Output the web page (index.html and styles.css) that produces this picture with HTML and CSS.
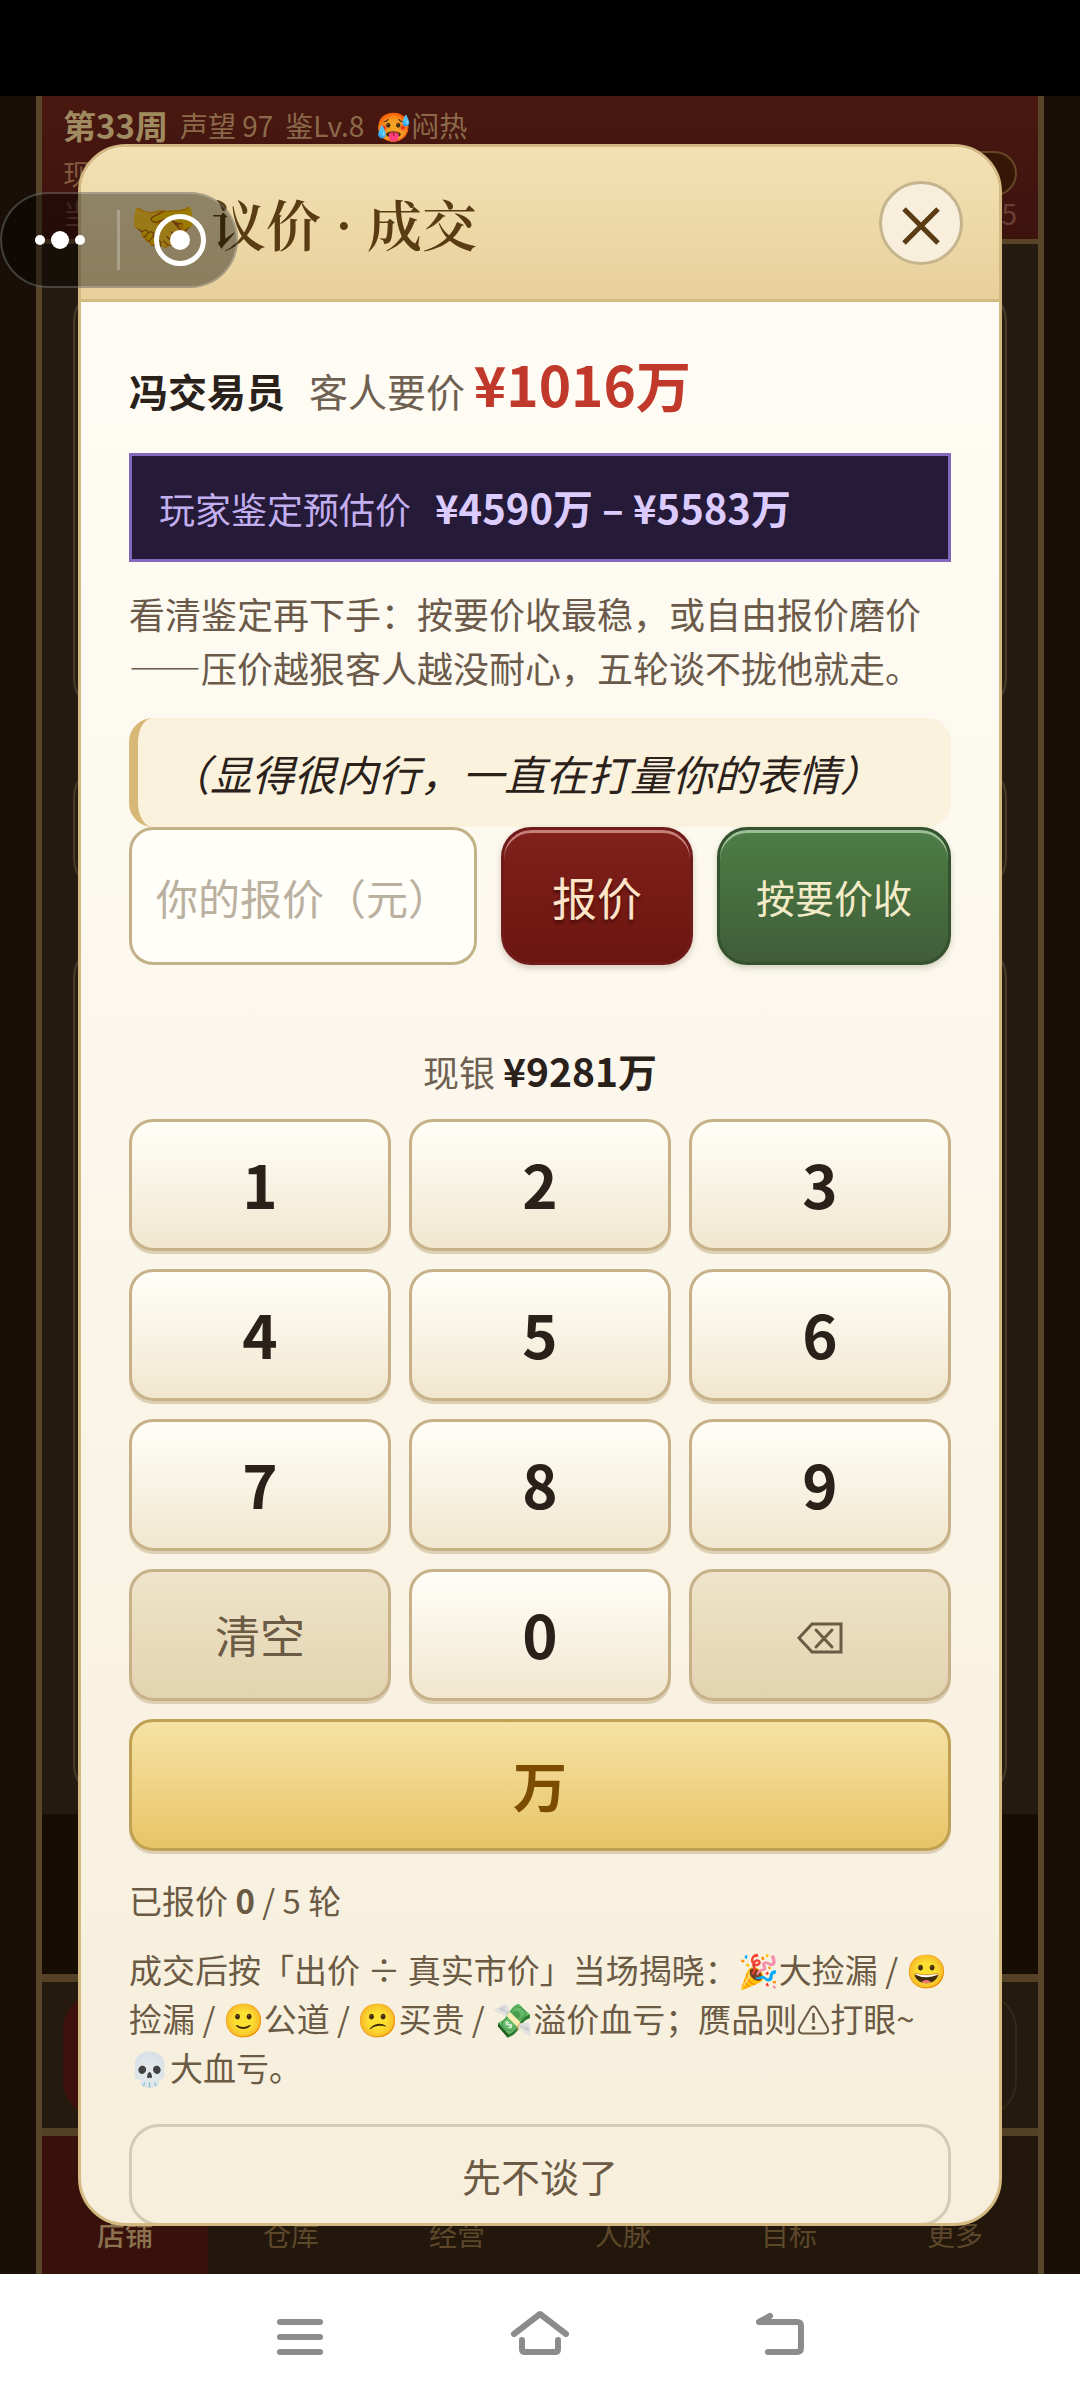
FILE: index.html
```html
<!DOCTYPE html>
<html lang="zh-CN">
<head>
<meta charset="utf-8">
<meta name="viewport" content="width=device-width, initial-scale=1">
<title>议价 · 成交</title>
<link rel="stylesheet" href="styles.css">
</head>
<body>
<div class="phone">
  <div class="statusbar"></div>

  <main class="stage">
    <div class="game">
      <header class="hud">
        <p class="hud-row"><strong class="week">第33周</strong><span>声望 97</span><span>鉴Lv.8</span><span>🥵闷热</span></p>
        <p class="hud-row hud-cash"><span>现</span><span class="pill"></span></p>
        <p class="hud-row hud-day"><span>当</span><span>5</span></p>
      </header>
      <div class="room">
        <div class="card card-a"></div>
        <div class="card card-b"></div>
        <div class="card card-c"></div>
      </div>
      <div class="shade"></div>
      <div class="tray"><div class="tray-main"></div><div class="tray-side"></div></div>
      <nav class="tabs">
        <a class="tab tab-on" href="#shop">店铺</a>
        <a class="tab" href="#store">仓库</a>
        <a class="tab" href="#manage">经营</a>
        <a class="tab" href="#people">人脉</a>
        <a class="tab" href="#goals">目标</a>
        <a class="tab" href="#more">更多</a>
      </nav>
    </div>

    <section class="modal" role="dialog" aria-labelledby="modal-title">
      <header class="modal-head">
        <h1 class="modal-title" id="modal-title">🤝 议价 · 成交</h1>
        <button class="close" type="button" aria-label="关闭">
          <svg width="38" height="38" viewBox="0 0 38 38"><path d="M2 2L36 36M36 2L2 36" fill="none" stroke="#5a3c14" stroke-width="5"/></svg>
        </button>
      </header>
      <div class="modal-body">
        <p class="ask"><strong>冯交易员</strong><span class="ask-label">客人要价 <b class="ask-price">¥1016万</b></span></p>
        <p class="estimate"><span>玩家鉴定预估价</span><b class="estimate-price">¥4590万 – ¥5583万</b></p>
        <p class="hint">看清鉴定再下手：按要价收最稳，或自由报价磨价——压价越狠客人越没耐心，五轮谈不拢他就走。</p>
        <blockquote class="quote">（显得很内行，一直在打量你的表情）</blockquote>
        <form class="offer">
          <input class="offer-input" type="text" inputmode="numeric" aria-label="你的报价（元）" placeholder="你的报价（元）">
          <button class="btn btn-offer" type="button">报价</button>
          <button class="btn btn-accept" type="button">按要价收</button>
        </form>
        <p class="cash">现银 <b>¥9281万</b></p>
        <div class="keypad">
          <button class="key" type="button">1</button>
          <button class="key" type="button">2</button>
          <button class="key" type="button">3</button>
          <button class="key" type="button">4</button>
          <button class="key" type="button">5</button>
          <button class="key" type="button">6</button>
          <button class="key" type="button">7</button>
          <button class="key" type="button">8</button>
          <button class="key" type="button">9</button>
          <button class="key key-tool" type="button">清空</button>
          <button class="key" type="button">0</button>
          <button class="key key-tool" type="button" aria-label="退格">
            <svg class="erase" width="46" height="32" viewBox="0 0 46 32"><path d="M2 16L15 2H44V30H15Z" fill="none" stroke="#6b5a44" stroke-width="3"/><path d="M19 8L35 25M35 8L19 25" fill="none" stroke="#6b5a44" stroke-width="3" stroke-linecap="round"/></svg>
          </button>
          <button class="key key-wan" type="button">万</button>
        </div>
        <p class="rounds">已报价 <b>0</b> / 5 轮</p>
        <p class="legend">成交后按「出价 ÷ 真实市价」当场揭晓：🎉大捡漏 / 😀捡漏 / 🙂公道 / 😕买贵 / 💸溢价血亏；赝品则<svg class="warn" role="img" aria-label="警告" width="33" height="30" viewBox="0 0 33 30"><path d="M13.500 3.500Q16.500 -1 19.500 3.500L30.500 22.500Q32.500 28 27.500 28.500H5.500Q.5 28 2.500 22.500Z" fill="none" stroke="#6b5a44" stroke-width="2"/><path d="M16.500 8V18" stroke="#6b5a44" stroke-width="2.500"/><circle cx="16.500" cy="23" r="2" fill="#6b5a44"/></svg>打眼~💀大血亏。</p>
        <button class="leave" type="button">先不谈了</button>
      </div>
    </section>

    <div class="capsule">
      <svg width="238" height="96" viewBox="0 0 238 96">
        <g fill="#fff"><circle cx="40" cy="48" r="5"/><circle cx="60" cy="48" r="9"/><circle cx="80" cy="48" r="5"/><circle cx="180" cy="48" r="10"/></g>
        <path d="M118.500 18V78" stroke="#fff" stroke-opacity=".25" stroke-width="3"/>
        <circle cx="180" cy="48" r="23.500" fill="none" stroke="#fff" stroke-width="5"/>
      </svg>
    </div>
  </main>

  <nav class="sysnav" aria-label="系统导航">
    <button class="sysbtn" type="button" aria-label="菜单"><svg width="64" height="64" viewBox="0 0 64 64"><path d="M12 17H52M12 32H52M12 47H52"/></svg></button>
    <button class="sysbtn" type="button" aria-label="主页"><svg width="64" height="64" viewBox="0 0 64 64"><path d="M6 29L32 9L58 29M14 35V44Q14 47 17 47H47Q50 47 50 44V35"/></svg></button>
    <button class="sysbtn" type="button" aria-label="返回"><svg width="64" height="64" viewBox="0 0 64 64"><path d="M22 11L11 17H49Q53 17 53 21V43Q53 47 49 47H20"/></svg></button>
  </nav>
</div>
</body>
</html>
```
FILE: styles.css
```css
* { box-sizing: border-box; }
body, p, h1, blockquote { margin: 0; }
body {
  background: #000;
  color: #2b211b;
  font-family: "Noto Sans CJK SC", "Noto Sans", sans-serif;
  font-size: 36px;
}
button, input { font: inherit; color: inherit; margin: 0; padding: 0; }
svg { display: block; }

.phone { display: flex; flex-direction: column; min-height: 100vh; }
.statusbar { height: 96px; background: #000; }
.stage { position: relative; flex: 1; padding: 0 36px; background: #190f08; }

/* game screen, dimmed behind the dialog */
.game {
  display: flex;
  flex-direction: column;
  position: absolute;
  inset: 0 36px;
  border: solid #58452a;
  border-width: 0 6px;
  background: #241a0f;
}
.hud {
  height: 148px;
  padding: 9px 21px 0;
  border-bottom: 5px solid #5a4428;
  background: linear-gradient(#491810, #3d130e);
  color: #8b6a4b;
  font-size: 28px;
}
.hud-row { display: flex; align-items: center; gap: 12px; height: 40px; white-space: nowrap; }
.week { color: #a08a60; font-size: 33px; }
.hud-cash { height: 56px; justify-content: space-between; color: #80593f; }
.hud-day { height: 24px; justify-content: space-between; color: #6b4034; }
.pill { width: 120px; height: 45px; border: 2px solid #664527; border-radius: 23px; background: #361705; }
.room { display: flex; flex-direction: column; gap: 48px; height: 1570px; padding: 42px 31px 14px; background: #261b10; }
.card { border: 2px solid #4a3b2c; border-radius: 36px; background: #2a1e13; }
.card-a { height: 428px; }
.card-b { height: 132px; }
.card-c { flex: 1; }
.shade { flex: 1; background: #170d04; }
.tray {
  display: flex;
  justify-content: space-between;
  height: 162px;
  padding: 11px 21px;
  border: solid #544024;
  border-width: 8px 0;
  background: #251a0e;
}
.tray-main { width: 300px; border-radius: 36px; background: #3e110c; }
.tray-side { width: 300px; border: 2px solid #34281a; border-radius: 36px; }
.tabs { display: flex; height: 138px; background: #23170b; }
.tab {
  display: flex;
  flex: 1;
  align-items: flex-end;
  justify-content: center;
  padding-bottom: 20px;
  color: #5c472b;
  font-size: 28px;
  text-decoration: none;
}
.tab-on { background: #39110b; color: #8b7150; font-weight: 500; }

/* dialog */
.modal {
  display: flex;
  flex-direction: column;
  position: absolute;
  inset: 48px 78px;
  overflow: hidden;
  border: 3px solid #d3b982;
  border-radius: 48px;
  background: linear-gradient(#fffdf6, #fcf8ee 40%, #f7eedb);
}
.modal-head {
  display: flex;
  flex: none;
  align-items: center;
  justify-content: space-between;
  height: 155px;
  padding: 0 36px 0 48px;
  border-bottom: 3px solid #d3bc82;
  background: linear-gradient(#f3e1b4, #e8d09b);
}
.modal-title {
  color: #5a3c14;
  font-family: "Noto Serif CJK SC", "Noto Sans CJK SC", serif;
  font-size: 55px;
  font-weight: 600;
  line-height: 72px;
}
.close {
  display: flex;
  align-items: center;
  justify-content: center;
  width: 84px;
  height: 84px;
  padding-top: 6px;
  border: 3px solid #c6b48f;
  border-radius: 50%;
  background: #f7eedb;
}
.modal-body { flex: 1; min-height: 0; padding: 41px 48px 0; overflow: hidden; }

.ask { display: flex; align-items: baseline; gap: 24px; height: 81px; font-size: 39px; line-height: 81px; }
.ask-label { color: #6f6152; }
.ask-price { color: #c0392b; font-size: 55px; line-height: 81px; }
.estimate {
  display: flex;
  align-items: baseline;
  gap: 24px;
  height: 109px;
  margin-top: 29px;
  padding: 21px 27px;
  border: 3px solid #8468bb;
  background: #251a37;
  color: #c3aff0;
  line-height: 60px;
}
.estimate-price { color: #dccbff; font-size: 40px; }
.hint { margin-top: 24px; color: #6b5a4a; line-height: 54px; }
.quote {
  height: 109px;
  margin-top: 24px;
  padding: 23px 30px;
  border-left: 9px solid #d8b877;
  border-radius: 24px;
  background: #faf2dc;
  font-size: 42px;
  font-style: italic;
  line-height: 63px;
}
.offer { display: flex; gap: 24px; height: 138px; }
.offer-input {
  flex: 1;
  min-width: 0;
  padding: 0 24px;
  border: 3px solid #c3b188;
  border-radius: 24px;
  background: #fffef8;
  font-size: 42px;
}
.offer-input::placeholder { color: #bab09f; opacity: 1; }
.btn { border: 3px solid; border-radius: 30px; }
.btn-offer {
  padding: 0 48px;
  border-color: #701c1b;
  background: linear-gradient(#80211c, #6c1510);
  box-shadow: inset 0 3px 0 #c77f7a, 0 3px 6px #d6c8ba;
  color: #ffe5c8;
  font-size: 45px;
  text-shadow: 0 3px 3px #4d0d0a;
}
.btn-accept {
  padding: 0 36px;
  border-color: #34522e;
  background: linear-gradient(#4e7d48, #47703f 40%, #405d3a);
  box-shadow: inset 0 3px 0 #9dbf98, 0 3px 6px #d2d0ba;
  color: #f3ebc8;
  font-size: 39px;
}
.cash { height: 60px; margin-top: 75px; color: #6f6152; line-height: 60px; text-align: center; }
.cash b { color: #2b211b; font-size: 39px; }

.keypad { display: grid; grid-template-columns: repeat(3, 1fr); grid-auto-rows: 132px; gap: 18px; margin-top: 19px; }
.key {
  display: flex;
  align-items: center;
  justify-content: center;
  padding-bottom: 4px;
  border: 3px solid #c6b189;
  border-radius: 24px;
  background: linear-gradient(#fffef8, #f1e7cf);
  box-shadow: 0 3px 0 #dccfb4;
  font-size: 60px;
  font-weight: 700;
  line-height: 60px;
}
.key-tool { padding: 0; background: linear-gradient(#efe4ca, #e2d4b0); color: #6b5a44; font-size: 45px; font-weight: 400; }
.erase { margin-top: 6px; }
.key-wan {
  grid-column: 1 / -1;
  padding: 0;
  border-color: #c0a052;
  background: linear-gradient(#f5e2a5, #e8c467);
  color: #7c4d00;
  font-size: 54px;
}
.rounds { margin-top: 24px; color: #6b5a44; font-size: 33px; line-height: 50px; }
.legend { margin-top: 20px; color: #6b5a44; font-size: 33px; line-height: 49px; }
.warn { display: inline-block; vertical-align: -3px; }
.leave {
  width: 100%;
  height: 102px;
  margin-top: 32px;
  border: 3px solid #d5cab3;
  border-radius: 30px;
  background: transparent;
  color: #6b5a44;
  font-size: 39px;
}

/* floating mini-program capsule */
.capsule {
  position: absolute;
  top: 96px;
  left: 0;
  border-radius: 48px;
  background: rgba(0, 0, 0, .4);
  box-shadow: inset 0 0 0 2px rgba(255, 255, 255, .22);
}

.sysnav { display: flex; align-items: center; justify-content: center; gap: 176px; height: 126px; background: #fff; }
.sysbtn { width: 64px; height: 64px; border: 0; background: none; }
.sysbtn path { fill: none; stroke: #8c8c8c; stroke-width: 6; stroke-linecap: round; stroke-linejoin: round; }
```
